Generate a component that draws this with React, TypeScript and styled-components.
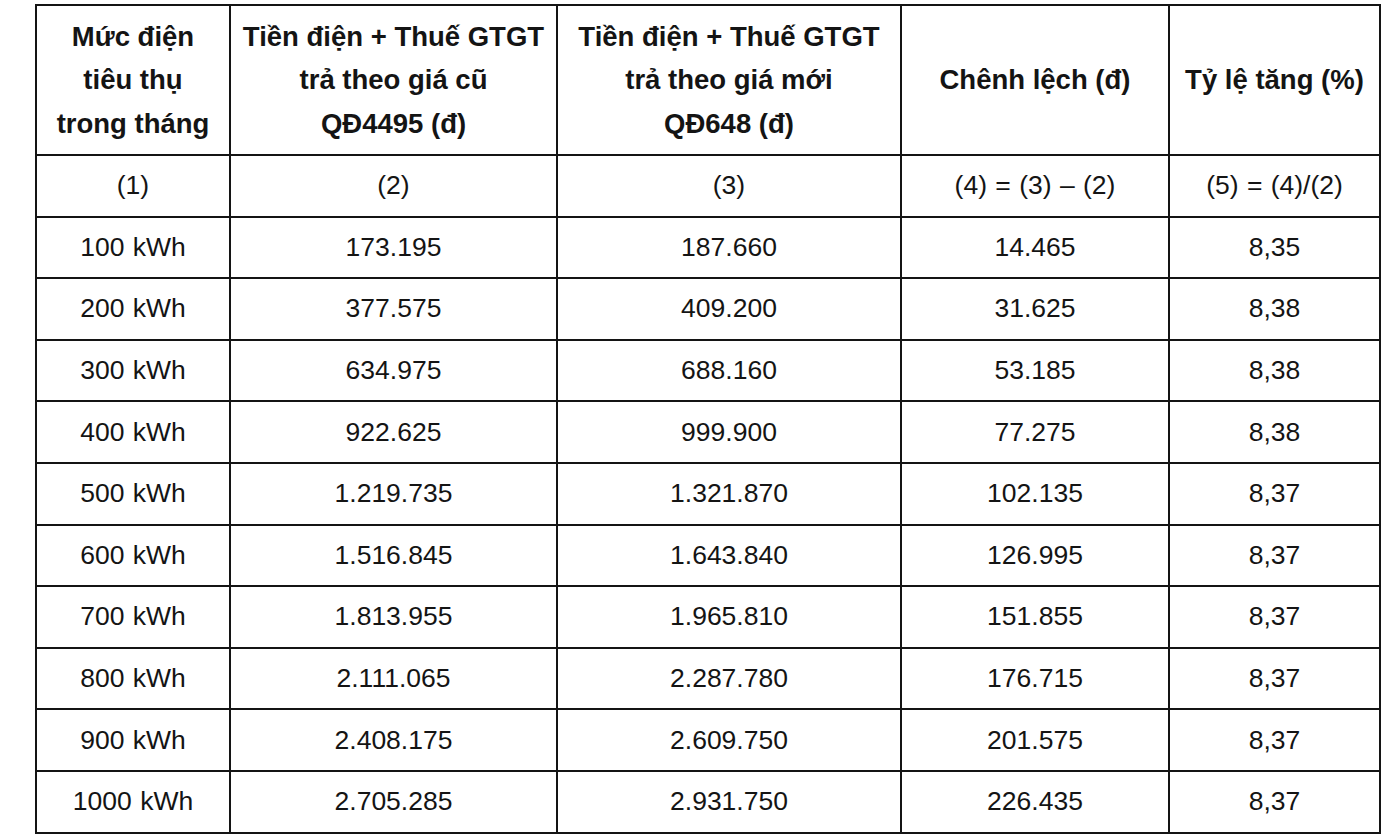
import React from "react";
import styled, { createGlobalStyle } from "styled-components";

const Global = createGlobalStyle`
  html, body { margin: 0; padding: 0; background: #ffffff; }
  body { font-family: "Liberation Sans", Arial, sans-serif; color: #141414; }
`;

const Page = styled.div`
  width: 1400px;
  height: 840px;
  padding: 4px 0 0 35px;
  box-sizing: border-box;
  background: #fff;
`;

const Table = styled.table`
  border-collapse: collapse;
  table-layout: fixed;
  width: 1344px;
  border: 2px solid #141414;
`;

const HeadCell = styled.th`
  border: 2px solid #141414;
  font-weight: 700;
  font-size: 27.5px;
  line-height: 43.5px;
  text-align: center;
  vertical-align: middle;
  padding: 0;
  height: 150px;
  box-sizing: border-box;
  white-space: nowrap;
`;

const Cell = styled.td`
  border: 2px solid #141414;
  font-size: 26.5px;
  text-align: center;
  vertical-align: middle;
  padding: 0;
  height: 61.6px;
  box-sizing: border-box;
  word-spacing: 1px;
`;

const widths = [194, 327, 344, 268, 211];

const headers: string[][] = [
  ["Mức điện", "tiêu thụ", "trong tháng"],
  ["Tiền điện + Thuế GTGT", "trả theo giá cũ", "QĐ4495 (đ)"],
  ["Tiền điện + Thuế GTGT", "trả theo giá mới", "QĐ648 (đ)"],
  ["Chênh lệch (đ)"],
  ["Tỷ lệ tăng (%)"],
];

const rows: string[][] = [
  ["(1)", "(2)", "(3)", "(4) = (3) – (2)", "(5) = (4)/(2)"],
  ["100 kWh", "173.195", "187.660", "14.465", "8,35"],
  ["200 kWh", "377.575", "409.200", "31.625", "8,38"],
  ["300 kWh", "634.975", "688.160", "53.185", "8,38"],
  ["400 kWh", "922.625", "999.900", "77.275", "8,38"],
  ["500 kWh", "1.219.735", "1.321.870", "102.135", "8,37"],
  ["600 kWh", "1.516.845", "1.643.840", "126.995", "8,37"],
  ["700 kWh", "1.813.955", "1.965.810", "151.855", "8,37"],
  ["800 kWh", "2.111.065", "2.287.780", "176.715", "8,37"],
  ["900 kWh", "2.408.175", "2.609.750", "201.575", "8,37"],
  ["1000 kWh", "2.705.285", "2.931.750", "226.435", "8,37"],
];

export default function App() {
  return (
    <>
      <Global />
      <Page>
        <Table>
          <colgroup>
            {widths.map((w, i) => (
              <col key={i} style={{ width: w }} />
            ))}
          </colgroup>
          <thead>
            <tr>
              {headers.map((lines, i) => (
                <HeadCell key={i}>
                  {lines.map((l, j) => (
                    <div key={j}>{l}</div>
                  ))}
                </HeadCell>
              ))}
            </tr>
          </thead>
          <tbody>
            {rows.map((r, i) => (
              <tr key={i}>
                {r.map((c, j) => (
                  <Cell key={j}>{c}</Cell>
                ))}
              </tr>
            ))}
          </tbody>
        </Table>
      </Page>
    </>
  );
}
